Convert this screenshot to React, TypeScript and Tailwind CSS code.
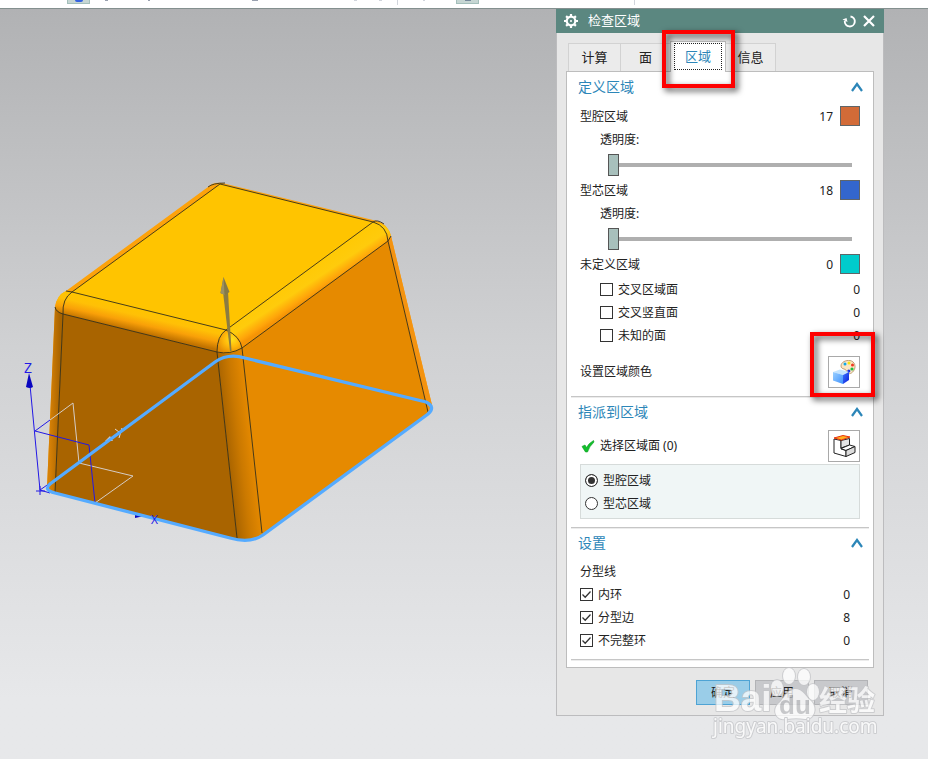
import React, { useState } from 'react';

const UI_FONT = "font-['Noto_Sans','Noto_Sans_CJK_SC',sans-serif]";

function Toolbar() {
  return (
    <header className="flex h-[9px] shrink-0 items-start overflow-hidden border-b border-[#84908f] bg-white">
      <button aria-label="Shaded" className="ml-[67px] flex h-1 w-[23px] justify-center border border-t-0 border-[#a3bfba] bg-[#c6d6d3]">
        <span className="h-[2px] w-2 rounded-b bg-[#3563e0]" />
      </button>
      <span className="ml-[15px] h-px w-[3px] bg-gray-400" />
      <span className="ml-10 h-px w-[2px] bg-gray-400" />
      <span className="ml-[102px] h-px w-[6px] bg-gray-400" />
      <span className="ml-[96px] h-px w-[3px] bg-gray-300" />
      <span className="ml-[22px] h-px w-[3px] bg-gray-300" />
      <span className="ml-[15px] h-[5px] w-px bg-gray-300" />
      <span className="ml-[25px] h-px w-[2px] bg-gray-300" />
      <button aria-label="Layers" className="ml-[31px] flex h-1 w-[23px] justify-center border border-t-0 border-[#a3bfba] bg-[#c6d6d3]">
        <span className="h-px w-[6px] bg-[#75889a]" />
      </button>
      <span className="ml-[155px] h-[5px] w-px bg-gray-300" />
    </header>
  );
}

function Model() {
  return (
    <svg width="556" height="740" viewBox="0 9 556 740" className="block max-w-full">
      <defs>
        <linearGradient id="leftFillet" gradientUnits="userSpaceOnUse" x1="149" y1="311" x2="144" y2="333">
          <stop offset="0" stopColor="#ffc400" />
          <stop offset="0.3" stopColor="#ffc006" />
          <stop offset="0.65" stopColor="#f9a008" />
          <stop offset="1" stopColor="#c27300" />
        </linearGradient>
        <linearGradient id="rightFillet" gradientUnits="userSpaceOnUse" x1="299" y1="275" x2="313" y2="296">
          <stop offset="0" stopColor="#ffc905" />
          <stop offset="0.5" stopColor="#ffcb0c" />
          <stop offset="0.85" stopColor="#ffa50a" />
          <stop offset="1" stopColor="#f69405" />
        </linearGradient>
        <linearGradient id="frontFillet" gradientUnits="userSpaceOnUse" x1="227" y1="450" x2="253" y2="447">
          <stop offset="0" stopColor="#a96400" />
          <stop offset="0.5" stopColor="#cb7900" />
          <stop offset="1" stopColor="#e58900" />
        </linearGradient>
        <linearGradient id="sideFillet" gradientUnits="userSpaceOnUse" x1="50" y1="400" x2="60" y2="400">
          <stop offset="0" stopColor="#d58006" />
          <stop offset="1" stopColor="#a96400" />
        </linearGradient>
        <radialGradient id="corner" cx="0.6" cy="0.4" r="0.65">
          <stop offset="0" stopColor="#ffe21c" />
          <stop offset="0.5" stopColor="#ffb80a" />
          <stop offset="1" stopColor="#e38a04" />
        </radialGradient>
      </defs>

      {/* body */}
      <path d="M66 291 L208 187 Q213 182 222 183 L377 221 Q388 224 391 236 L432 405 Q433 410 428 414 L263 535 Q250 544 230 538 L53 493 Q47 492 47 488 L55 307 Q57 295 66 291Z" fill="#fda20a" />
      <path d="M220 184 L373 222 L226 330 L72 292Z" fill="#ffc400" />
      <path d="M55 307 Q57 295 66 291 L72 292 L226 330 Q217 338 217 352 L63 314 Q56 312 55 307Z" fill="url(#leftFillet)" />
      <path d="M373 222 Q388 223 391 236 L388 241 L242 348 Q238 336 226 330Z" fill="url(#rightFillet)" />
      <path d="M55 307 Q57 312 63 314 L55 493 Q47 492 47 488Z" fill="url(#sideFillet)" />
      <path d="M63 314 L217 352 L237 539 L55 493Z" fill="#a96400" />
      <path d="M242 348 L388 241 L428 413 L262 536Z" fill="#e68a00" />
      <path d="M388 241 L391 236 L432 405 L428 413Z" fill="#f49310" />
      <path d="M217 352 Q230 356 242 348 L262 536 Q250 543 237 539Z" fill="url(#frontFillet)" />
      <path d="M226 330 Q217 338 217 352 Q230 356 242 348 Q238 336 226 330Z" fill="url(#corner)" />

      {/* edges */}
      <g fill="none" stroke="#33301c" strokeWidth="0.900">
        <path d="M220 184 L373 222 L226 330 L72 292Z" />
        <path d="M208 187 Q213 183 225 183 M373 222 Q377 219 384 224 M373 222 Q387 226 388 241 L428 412 M391 236 L388 241 L242 348" />
        <path d="M66 291 L72 292 Q62 299 63 314 L55 493 M55 307 Q56 312 63 314 L217 352" />
        <path d="M226 330 Q217 336 217 352 L237 538 M226 330 Q240 336 242 348 L262 533 M217 352 Q230 355 242 348" />
      </g>

      {/* direction arrow */}
      <path d="M223 292 L228 292 L231.500 351 L230 351Z" fill="#8b7c42" />
      <path d="M223.500 277 L229.500 292 Q225 296 220.500 293Z" fill="#857a48" />
      <path d="M223.500 277 L224.500 295 L220.500 293Z" fill="#9c9262" />

      {/* datum axes */}
      <g fill="none" strokeWidth="1">
        <path d="M50 420 L73 403 L79 463 L133 476 L95 503" stroke="#d6cdc6" />
        <path d="M40 490 L30 385 M50 420 L35 431 L89 445 L95 503 M36 491 H45 M40 486 V495 M40 490 L50 483 M40 490 L50 493" stroke="#2218e6" />
        <path d="M115 429 L119 432 M122 428 L119 438" stroke="#e2ddd8" />
      </g>
      <path d="M29 373 L33 387 Q30 389 26 387Z" fill="#0a06c0" />
      <path d="M135 512 L144 516 L135 518Z" fill="#0a06c0" />
      <path d="M105 441 L110 436 L113 441Z" fill="#c8c8cc" />

      {/* selected loop */}
      <path d="M55 493 L230 538 Q250 544 263 535 L428 414 Q436 407 426 402 L245 358 Q228 353 215 362 L50 484 Q43 490 55 493Z" fill="none" stroke="#55abff" strokeWidth="3.300" />
      <text x="24" y="373" fontSize="14" fill="#2218e6" className="font-['Open_Sans',sans-serif]">Z</text>
      <text x="151" y="524" fontSize="12" fill="#2218e6" className="font-['Open_Sans',sans-serif]">X</text>
    </svg>
  );
}

function Chevron() {
  return (
    <svg width="12" height="10" viewBox="0 0 12 10" fill="none" stroke="#2c86b8" strokeWidth="2.200">
      <path d="M1 9 L6 2 L11 9" />
    </svg>
  );
}

function Section({ title, className, children }: { title: string; className: string; children: React.ReactNode }) {
  return (
    <section className="mx-1 border-b border-[#c6c6c6] shadow-[0_1px_0_#ececec]">
      <button className="flex h-[30px] w-full items-center justify-between pr-[6px] pb-px pl-[7px] text-[14px] text-[#2c86b8]">
        {title}
        <Chevron />
      </button>
      <div className={`px-[9px] ${className}`}>{children}</div>
    </section>
  );
}

function RegionRow({ label, count, swatch }: { label: string; count: number; swatch: string }) {
  return (
    <div className="flex h-6 items-center">
      <span className="flex-1 pt-[2px]">{label}</span>
      <span className="mr-[7px] pt-[2px]">{count}</span>
      <button aria-label={label} className={`h-5 w-5 border border-[#5f6568] ${swatch}`} />
    </div>
  );
}

function Transparency({ id }: { id: string }) {
  const [value, setValue] = useState(0);
  return (
    <div className="pr-2 pl-5">
      <label htmlFor={id} className="flex h-6 items-center">透明度:</label>
      <div className="flex h-[26px] items-center pl-2">
        <input
          id={id}
          type="range"
          value={value}
          onChange={(e) => setValue(Number(e.target.value))}
          className="h-[22px] w-full appearance-none bg-transparent [&::-webkit-slider-runnable-track]:h-1 [&::-webkit-slider-runnable-track]:bg-[#afafaf] [&::-webkit-slider-thumb]:-mt-[9px] [&::-webkit-slider-thumb]:h-[22px] [&::-webkit-slider-thumb]:w-[11px] [&::-webkit-slider-thumb]:appearance-none [&::-webkit-slider-thumb]:border [&::-webkit-slider-thumb]:border-[#555] [&::-webkit-slider-thumb]:bg-[#a8c0bc]"
        />
      </div>
    </div>
  );
}

function CheckRow({ label, count, checked = false }: { label: string; count: number; checked?: boolean }) {
  const [on, setOn] = useState(checked);
  return (
    <div className="flex h-[23px] items-center justify-between">
      <label className="flex items-center gap-[5px]">
        <span className="relative flex h-[13px] w-[13px]">
          <input
            type="checkbox"
            checked={on}
            onChange={() => setOn(!on)}
            className="h-[13px] w-[13px] appearance-none border border-[#333] bg-white"
          />
          {on && (
            <svg viewBox="0 0 13 13" className="pointer-events-none absolute inset-0" fill="none" stroke="#333" strokeWidth="1.300">
              <path d="M2.500 6.500 L5.200 9.200 L10.500 3.500" />
            </svg>
          )}
        </span>
        {label}
      </label>
      <span>{count}</span>
    </div>
  );
}

function RadioRow({ label, checked, onChange }: { label: string; checked: boolean; onChange: () => void }) {
  return (
    <label className="flex h-[23px] items-center gap-[5px]">
      <input
        type="radio"
        name="region"
        checked={checked}
        onChange={onChange}
        className="h-[13px] w-[13px] appearance-none rounded-full border border-[#333] bg-white checked:bg-[#333] checked:shadow-[inset_0_0_0_2px_#fff]"
      />
      {label}
    </label>
  );
}

function PaletteIcon() {
  return (
    <svg width="24" height="24" viewBox="0 0 24 24">
      <defs>
        <linearGradient id="cubeFront" x1="0" y1="0" x2="1" y2="1">
          <stop offset="0" stopColor="#9bd0ff" />
          <stop offset="1" stopColor="#3f92ff" />
        </linearGradient>
        <linearGradient id="cubeSide" x1="0" y1="0" x2="1" y2="1">
          <stop offset="0" stopColor="#3c74ff" />
          <stop offset="1" stopColor="#0a1fd8" />
        </linearGradient>
      </defs>
      <path d="M9 6 C9 2 14 0 18 0.500 C23 1.500 24.500 7 21.500 11 C19 14.500 15 14.500 14.500 12 C15 8 9 10 9 6Z" fill="#fbe6c3" stroke="#b18a5a" strokeWidth="0.800" />
      <circle cx="13" cy="4" r="1.500" fill="#12a8e8" />
      <circle cx="17" cy="3" r="1.500" fill="#f5e410" />
      <circle cx="20.500" cy="5" r="1.500" fill="#f03820" />
      <circle cx="20" cy="9" r="1.600" fill="#20c040" />
      <circle cx="16.800" cy="11" r="1.600" fill="#1830e0" />
      <path d="M1 12 L8 9.500 L17 12 L11 15Z" fill="#c4e4ff" />
      <path d="M1 12 L11 15 V24 L1 20.500Z" fill="url(#cubeFront)" />
      <path d="M11 15 L17 12 V20 L11 24Z" fill="url(#cubeSide)" />
    </svg>
  );
}

function FaceIcon() {
  return (
    <svg width="24" height="24" viewBox="0 0 24 24" stroke="#222" strokeWidth="1" strokeLinejoin="round">
      <path d="M2 5 L9 6.500 V15 L14 16.500 V22.500 L2 19Z" fill="#fff" />
      <path d="M9 6.500 L17.500 4.500 V11 L9 14Z" fill="#e4e4e4" />
      <path d="M9 14.500 L17.500 11 L23 12.500 L14 16.500Z" fill="#fff" />
      <path d="M14 16.500 L23 12.500 V18.500 L14 22.500Z" fill="#dcdcdc" />
      <path d="M2 4 L11 1.500 L18 3 L9.500 6Z" fill="#ffb020" stroke="#e8320c" />
    </svg>
  );
}

function Highlight({ className }: { className: string }) {
  return (
    <span className={`pointer-events-none absolute z-10 border-4 border-[#fe0000] drop-shadow-[3px_3px_3px_rgba(0,0,0,0.7)] ${className}`} />
  );
}

function Tabs() {
  const idle = 'h-7 border border-b-0 border-[#d2d2d2] bg-[#ebebeb]';
  return (
    <div role="tablist" className="ml-[2px] flex items-end text-[13px] text-[#222]">
      <button role="tab" className={`w-[53px] ${idle}`}>计算</button>
      <button role="tab" className={`-ml-px w-[51px] ${idle}`}>面</button>
      <button role="tab" aria-selected="true" className="relative z-10 -mb-px -ml-px h-[31px] w-14 border border-b-0 border-[#bdbdbd] bg-white px-[3px] pt-px pb-[2px] text-[#2c86b8]">
        <span className="flex h-full items-center justify-center border border-dotted border-[#222]">区域</span>
        <Highlight className="-top-3 -right-[10px] -bottom-[16px] -left-[9px]" />
      </button>
      <button role="tab" className={`-ml-px w-[51px] ${idle}`}>信息</button>
    </div>
  );
}

function RegionDialog() {
  const [target, setTarget] = useState('cavity');
  const footer = 'h-[25px] w-[54px] border text-[12px]';
  const square = 'flex h-8 w-8 items-center justify-center border border-[#a9a9a9] bg-white';

  return (
    <div role="dialog" aria-label="检查区域" className="w-[328px] shrink-0 self-start border border-t-0 border-[#bcbcbe] bg-[#e7e7e7] text-[12px] text-[#222]">
      <div className="-mx-px flex h-6 items-center bg-[#5b8780] pr-[9px] pl-2 text-white">
        <svg width="14" height="14" viewBox="0 0 14 14" fill="none" stroke="#fff">
          <circle cx="7" cy="7" r="4.300" strokeWidth="2.200" />
          <path d="M7 0 V2.500 M7 11.500 V14 M0 7 H2.500 M11.500 7 H14 M2.100 2.100 L3.800 3.800 M10.200 10.200 L11.900 11.900 M11.900 2.100 L10.200 3.800 M3.800 10.200 L2.100 11.900" strokeWidth="2.200" />
          <circle cx="7" cy="7" r="1" fill="#fff" stroke="none" />
        </svg>
        <h1 className="ml-[10px] flex-1 text-[13px]">检查区域</h1>
        <button aria-label="重置" className="mr-[7px]">
          <svg width="14" height="14" viewBox="0 0 14 14" fill="none" stroke="#fff" strokeWidth="1.900">
            <path d="M8.500 2.500 A5 5 0 1 1 2.800 7" />
            <path d="M0.500 5.500 L4.500 4 L5.500 8Z" fill="#fff" stroke="none" />
          </svg>
        </button>
        <button aria-label="关闭">
          <svg width="12" height="12" viewBox="0 0 12 12" stroke="#fff" strokeWidth="2.200">
            <path d="M1 1 L11 11 M11 1 L1 11" />
          </svg>
        </button>
      </div>

      <div className="px-[9px] pt-2">
        <Tabs />
        <div className="border border-[#bdbdbd] bg-white pb-[7px]">
          <Section title="定义区域" className="pt-[2px] pb-2">
            <RegionRow label="型腔区域" count={17} swatch="bg-[#d26b38]" />
            <Transparency id="cavity-alpha" />
            <RegionRow label="型芯区域" count={18} swatch="bg-[#3366cc]" />
            <Transparency id="core-alpha" />
            <RegionRow label="未定义区域" count={0} swatch="bg-[#00cccc]" />
            <div className="mt-[2px] pl-5">
              <CheckRow label="交叉区域面" count={0} />
              <CheckRow label="交叉竖直面" count={0} />
              <CheckRow label="未知的面" count={0} />
            </div>
            <div className="mt-[9px] flex items-center justify-between">
              设置区域颜色
              <button aria-label="设置区域颜色" className={`relative ${square}`}>
                <PaletteIcon />
                <Highlight className="-top-[25px] -right-4 -bottom-[10px] -left-[19px]" />
              </button>
            </div>
          </Section>

          <Section title="指派到区域" className="pt-[3px] pb-2">
            <div className="flex items-center">
              <svg width="14" height="14" viewBox="0 0 14 14" className="ml-px">
                <path d="M1 7.500 L4 6 L5.500 8.500 Q8 4 12.500 1.500 L13 3 Q8.500 7 6.500 13 L4.500 13Z" fill="#12c02c" stroke="#0b9a20" strokeWidth="0.600" />
              </svg>
              <span className="ml-[5px] flex-1">选择区域面 (0)</span>
              <button aria-label="选择区域面" className={square}>
                <FaceIcon />
              </button>
            </div>
            <div role="radiogroup" className="mt-[2px] border border-[#d6dbda] bg-[#f0f6f6] px-1 pt-1 pb-[3px]">
              <RadioRow label="型腔区域" checked={target === 'cavity'} onChange={() => setTarget('cavity')} />
              <RadioRow label="型芯区域" checked={target === 'core'} onChange={() => setTarget('core')} />
            </div>
          </Section>

          <Section title="设置" className="pt-[2px] pb-[7px]">
            <div className="flex h-[23px] items-center">分型线</div>
            <div className="pr-[10px]">
              <CheckRow label="内环" count={0} checked />
              <CheckRow label="分型边" count={8} checked />
              <CheckRow label="不完整环" count={0} checked />
            </div>
          </Section>
        </div>
      </div>

      <div className="flex justify-end gap-[5px] pt-3 pr-[15px] pb-[10px]">
        <button className={`${footer} border-[#4ea3d4] bg-[#9acde8]`}>确定</button>
        <button className={`${footer} border-[#b2b3b6] bg-[#c8c9cc]`}>应用</button>
        <button className={`${footer} border-[#b2b3b6] bg-[#c8c9cc]`}>取消</button>
      </div>
    </div>
  );
}

function Watermark() {
  return (
    <svg
      width="172"
      height="84"
      viewBox="0 0 172 84"
      className="pointer-events-none absolute right-[46px] bottom-[17px] z-20 opacity-75 [paint-order:stroke]"
      fill="#fff"
      stroke="#c4c5c8"
      strokeWidth="2"
      strokeLinejoin="round"
    >
      <text x="4" y="53" fontSize="37" fontWeight="700" className="font-['Liberation_Sans',sans-serif]">Bai</text>
      <ellipse cx="67" cy="30" rx="6" ry="8" />
      <ellipse cx="79" cy="18" rx="6" ry="8" />
      <ellipse cx="94" cy="19" rx="6" ry="8" />
      <ellipse cx="103" cy="34" rx="6" ry="8" />
      <path d="M85 31 C93 31 96 39 101 43 C108 50 104 62 95 61 C89 60 83 60 77 61 C66 63 62 53 68 46 C74 41 77 31 85 31Z" />
      <text x="69" y="56" fontSize="26" fontWeight="700" fill="#bdbec1" stroke="none" className="font-['Liberation_Sans',sans-serif]">du</text>
      <text x="109" y="53" fontSize="28" fontWeight="700" className="font-['Noto_Sans_CJK_SC',sans-serif]">经验</text>
      <text x="3" y="75" fontSize="19" className="font-['Noto_Sans',sans-serif]">jingyan.baidu.com</text>
    </svg>
  );
}

export default function App() {
  return (
    <div className={`relative flex min-h-screen flex-col ${UI_FONT}`}>
      <Toolbar />
      <main className="flex flex-1 bg-linear-to-b from-[#b1b2b4] via-[#d0d1d3] via-45% to-[#e7e8ea] to-92% pr-11">
        <div className="min-w-0 flex-1">
          <Model />
        </div>
        <RegionDialog />
      </main>
      <Watermark />
    </div>
  );
}
